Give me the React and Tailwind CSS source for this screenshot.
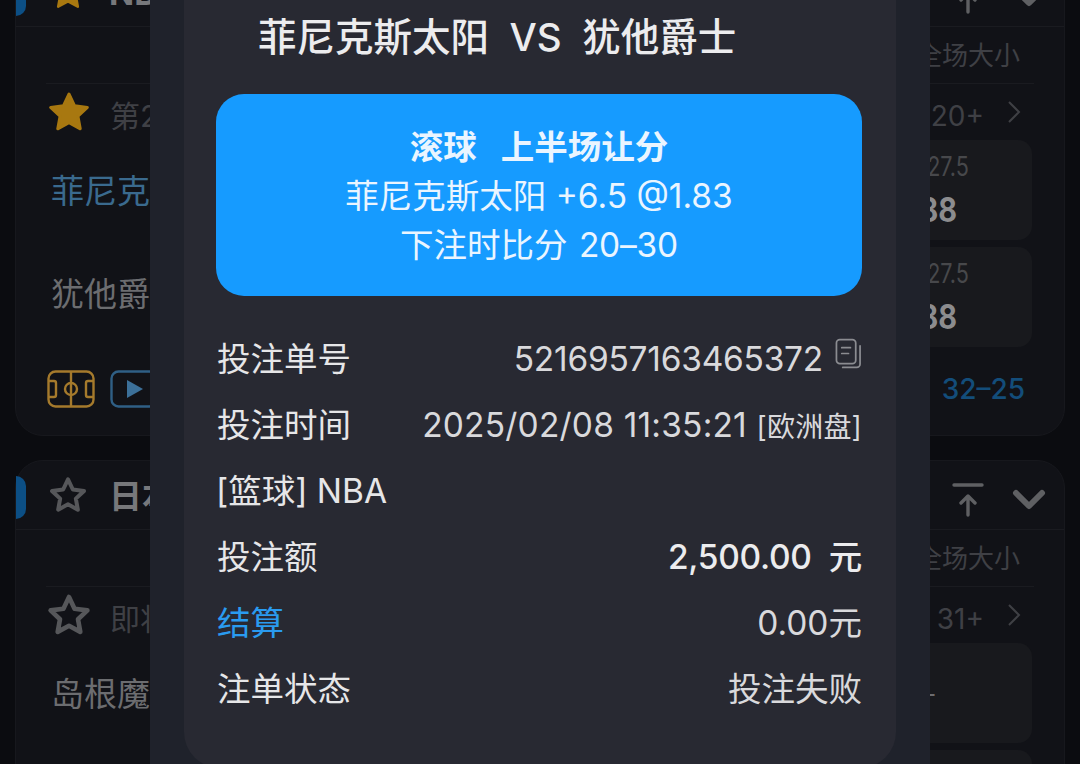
import React from 'react';

const font = "font-['Inter','Noto_Sans_CJK_SC',sans-serif]";

const Star = ({ filled, className }) => (
  <svg viewBox="0 0 24 24" className={className} fill={filled ? '#a87810' : 'none'} stroke={filled ? '#a87810' : '#56575a'} strokeWidth={filled ? 1.5 : 2.4} strokeLinejoin="round">
    <path d="M12 2.6l2.9 6.1 6.7.9-4.9 4.6 1.2 6.6L12 17.6l-5.9 3.2 1.2-6.6-4.9-4.6 6.7-.9z" />
  </svg>
);

const ArrowTop = () => (
  <svg viewBox="0 0 32 36" className="w-8 h-9" fill="none" stroke="#5f6063" strokeWidth="3.4" strokeLinecap="round" strokeLinejoin="round">
    <path d="M2 3h28" />
    <path d="M16 33V15M9 21l7-7 7 7" />
  </svg>
);

const ChevronDown = () => (
  <svg viewBox="0 0 34 22" className="w-[34px] h-[22px]" fill="none" stroke="#5f6063" strokeWidth="6" strokeLinecap="round" strokeLinejoin="round">
    <path d="M4 4l13 13L30 4" />
  </svg>
);

const ChevronRight = () => (
  <svg viewBox="0 0 14 24" className="w-[14px] h-6" fill="none" stroke="#3f4045" strokeWidth="2">
    <path d="M2 2l10 10L2 22" />
  </svg>
);

const PitchIcon = () => (
  <svg viewBox="0 0 48 38" className="w-12 h-[38px]" fill="none" stroke="#a57a2c" strokeWidth="2.4">
    <rect x="1.5" y="1.5" width="45" height="35" rx="7" />
    <path d="M24 1.5v35" />
    <circle cx="24" cy="19" r="6" />
    <path d="M2 11h5a2 2 0 0 1 2 2v12a2 2 0 0 1-2 2H2M46 11h-5a2 2 0 0 0-2 2v12a2 2 0 0 0 2 2h5" />
  </svg>
);

const PlayIcon = () => (
  <svg viewBox="0 0 48 38" className="w-12 h-[38px]" fill="none">
    <rect x="1.5" y="1.5" width="45" height="35" rx="7" stroke="#2f5f85" strokeWidth="2.4" />
    <path d="M17 10l16 9-16 9z" fill="#3c7099" />
  </svg>
);

const CopyIcon = () => (
  <svg viewBox="0 0 28 32" className="w-[27px] h-[31px] -mt-3" fill="none" stroke="#8b8c91" strokeWidth="1.8" strokeLinecap="round">
    <rect x="1.5" y="1.5" width="20" height="25" rx="3.5" />
    <path d="M7 10h9M7 16h7" />
    <path d="M26 8v19a3.5 3.5 0 0 1-3.5 3.5H8" />
  </svg>
);

const OddsBox = ({ label, value, dash }) => (
  <div className="w-[208px] h-[100px] rounded-[14px] bg-[#18191d] flex flex-col items-center justify-center">
    {dash ? (
      <span className="text-[26px] text-[#6b6c6f]">–</span>
    ) : (
      <>
        <span className="text-[27px] leading-[34px] text-[#47484b] scale-x-[0.8]">{label}</span>
        <span className="mt-[6px] text-[34px] leading-[40px] font-bold text-[#8c8c8e] scale-x-[0.85]">{value}</span>
      </>
    )}
  </div>
);

const LeagueCard = ({ name, filled, round, more, teams, odds, score, className }) => (
  <section className={`mx-[15px] rounded-[28px] border border-[#17181d] bg-[#111217] ${className}`}>
    <header className="relative h-[69px] flex items-center justify-between pl-[32px] pr-[18px] border-b border-[#1a1b20]">
      <div className="absolute left-0 top-[15px] w-[10px] h-[43px] rounded-r-[10px] bg-[#0c4f85]" />
      <div className="flex items-center gap-[21px]">
        <Star filled={filled} className="w-[40px] h-[40px]" />
        <span className="mt-[3px] text-[33px] font-bold text-[#77787b]">{name}</span>
      </div>
      <div className="flex items-center gap-[28px] pt-[9px]">
        <ArrowTop />
        <ChevronDown />
      </div>
    </header>
    <div className="mx-[30px]">
      <div className="h-[57px] flex items-center justify-end pr-[14px] border-b border-[#1a1b20] text-[26px] text-[#3f4045]">
        全场大小
      </div>
      <div className="h-[56px] flex items-center justify-between">
        <div className="flex items-center gap-[18px]">
          <Star filled={filled} className="w-[46px] h-[46px]" />
          <span className="mt-[9px] text-[30px] text-[#3f4045]">{round}</span>
        </div>
        <div className="flex items-center gap-[23px] pr-[13px] text-[28px] text-[#3f4045]">
          <span className="mt-[8px]">{more}</span>
          <ChevronRight />
        </div>
      </div>
      <div className="flex justify-between">
        <div className="flex flex-col pl-[5px] pt-[21px] text-[33px] leading-[60px]">
          <span className={teams[0].color}>{teams[0].name}</span>
          <span className={`mt-[43px] ${teams[1].color}`}>{teams[1].name}</span>
        </div>
        <div className="flex flex-col gap-[7px] pr-[2px]">
          {odds.map((o, i) => (
            <OddsBox key={i} {...o} />
          ))}
        </div>
      </div>
      {score && (
        <div className="h-[89px] flex items-center justify-between pb-[5px] pl-px">
          <div className="flex gap-[15px]">
            <PitchIcon />
            <PlayIcon />
          </div>
          <span className="pr-[9px] text-[28px] font-medium text-[#134d7a]">{score}</span>
        </div>
      )}
    </div>
  </section>
);

const Row = ({ label, labelClass = 'text-[#e6e6e8]', children }) => (
  <div className="h-[66px] flex items-center justify-between text-[33.5px]">
    <span className={labelClass}>{label}</span>
    {children}
  </div>
);

export default function App() {
  return (
    <div className={`relative h-[764px] w-[1080px] overflow-hidden bg-[#0b0c10] ${font}`}>
      <div className="-mt-[43px]">
        <LeagueCard
          name="NBA"
          filled
          round="第2节"
          more="20+"
          teams={[
            { name: '菲尼克斯太阳', color: 'text-[#3a6a8e]' },
            { name: '犹他爵士', color: 'text-[#6c6d70]' },
          ]}
          odds={[
            { label: '大 227.5', value: '1.88' },
            { label: '小 227.5', value: '1.88' },
          ]}
          score="32–25"
          className="h-[479px]"
        />
        <LeagueCard
          name="日本联赛"
          round="即将开赛"
          more="31+"
          teams={[
            { name: '岛根魔术师', color: 'text-[#6c6d70]' },
            { name: '琉球黄金国王', color: 'text-[#6c6d70]' },
          ]}
          odds={[{ dash: true }, { dash: true }]}
          className="mt-[24px] h-[340px]"
        />
      </div>

      {/* 注单详情弹窗 */}
      <div className="absolute inset-y-0 left-[150px] w-[780px] bg-[#1f222b] px-[34px]">
        <div className="h-[768px] rounded-b-[36px] bg-[#282932] pl-[32px] pr-[34px]">
          <h2 className="h-[76px] mb-[18px] pl-[42px] flex items-center text-[38.5px] font-medium text-[#ececee] whitespace-pre">
            菲尼克斯太阳  VS  犹他爵士
          </h2>
          <div className="h-[202px] pt-[3px] rounded-[28px] bg-[#169bff] flex flex-col items-center justify-center text-[33.5px] leading-[49px] text-[#eaf5ff]">
            <span className="font-bold whitespace-pre">滚球   上半场让分</span>
            <span>菲尼克斯太阳 +6.5 @1.83</span>
            <span>
              下注时比分 <span className="ml-[2px] tracking-[-0.2px]">20–30</span>
            </span>
          </div>
          <div className="mt-[30px] pl-px">
            <Row label="投注单号">
              <span className="flex items-center gap-[12px] text-[#d9d9dc] tracking-[-0.25px]">
                5216957163465372
                <CopyIcon />
              </span>
            </Row>
            <Row label="投注时间">
              <span className="text-[#d9d9dc] tracking-[0.2px]">
                2025/02/08 11:35:21 <span className="text-[28px]">[欧洲盘]</span>
              </span>
            </Row>
            <Row label="[篮球] NBA" labelClass="-ml-px text-[#e6e6e8]" />
            <Row label="投注额">
              <span className="font-medium text-[#ececee] whitespace-pre tracking-[-0.3px]">2,500.00  元</span>
            </Row>
            <Row label="结算" labelClass="text-[#2a9bf0]">
              <span className="text-[#d9d9dc]">0.00元</span>
            </Row>
            <Row label="注单状态">
              <span className="text-[#d9d9dc]">投注失败</span>
            </Row>
          </div>
        </div>
      </div>
    </div>
  );
}
